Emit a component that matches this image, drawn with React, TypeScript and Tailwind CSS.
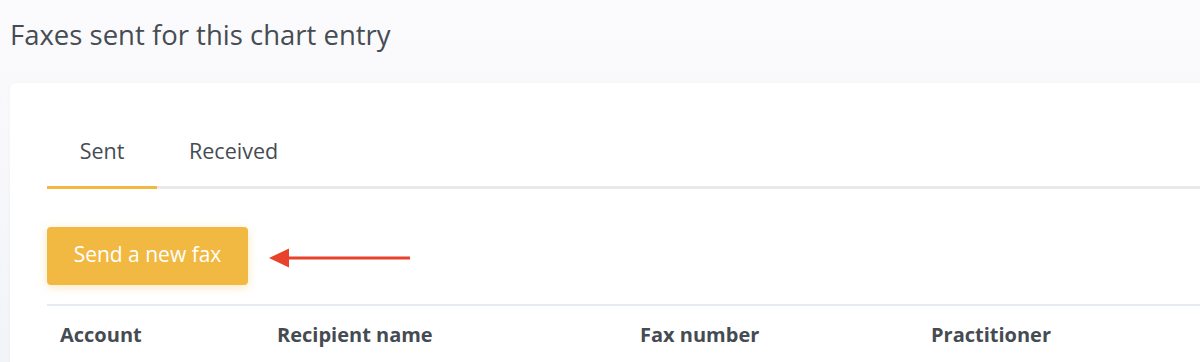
import React from "react";

export default function App() {
  const font = { fontFamily: '"Open Sans", "Noto Sans", sans-serif' };
  return (
    <div
      className="w-[1200px] h-[362px] overflow-hidden bg-gradient-to-b from-[#fbfbfd] to-[#f3f4f8]"
      style={font}
    >
      <h1 className="pl-[10px] pt-[17px] text-[27.5px] leading-[36px] font-medium text-[#464c53]">
        Faxes sent for this chart entry
      </h1>
      <div className="ml-[10px] mt-[30px] w-[1220px] h-[300px] bg-white rounded-[6px] shadow-[0_0_4px_rgba(0,0,0,0.03)] pl-[37px] pt-[53px]">
        <div className="flex border-b-[3px] border-[#e9e9ea]">
          <div className="w-[110px] flex justify-center pb-[20px] text-[21.5px] leading-[30px] text-[#464c53] border-b-[3px] border-[#f2b942] -mb-[3px]">
            Sent
          </div>
          <div className="px-[32px] flex justify-center pb-[20px] text-[21.5px] leading-[30px] text-[#464c53]">
            Received
          </div>
        </div>
        <div className="flex items-center mt-[38px]">
          <button className="w-[201px] h-[58px] pb-[4px] rounded-[4px] bg-[#f2b942] text-white text-[21px] leading-[30px] shadow-[0_2px_10px_rgba(242,185,66,0.35)]">
            Send a new fax
          </button>
          <svg width="142" height="22" viewBox="0 0 142 22" className="ml-[21px] mt-[4px]">
            <line x1="18" y1="11" x2="141" y2="11" stroke="#e8412c" strokeWidth="3.2" />
            <polygon points="0,11 20,1.5 20,20.5" fill="#e8412c" />
          </svg>
        </div>
        <div className="mt-[19px] border-t-2 border-[#e6ebf1] grid grid-cols-[217px_363px_291px_300px] pt-[15px]">
          {["Account", "Recipient name", "Fax number", "Practitioner"].map((h) => (
            <div key={h} className="pl-[13px] text-[20px] leading-[28px] font-bold text-[#454b52]">
              {h}
            </div>
          ))}
        </div>
      </div>
    </div>
  );
}
